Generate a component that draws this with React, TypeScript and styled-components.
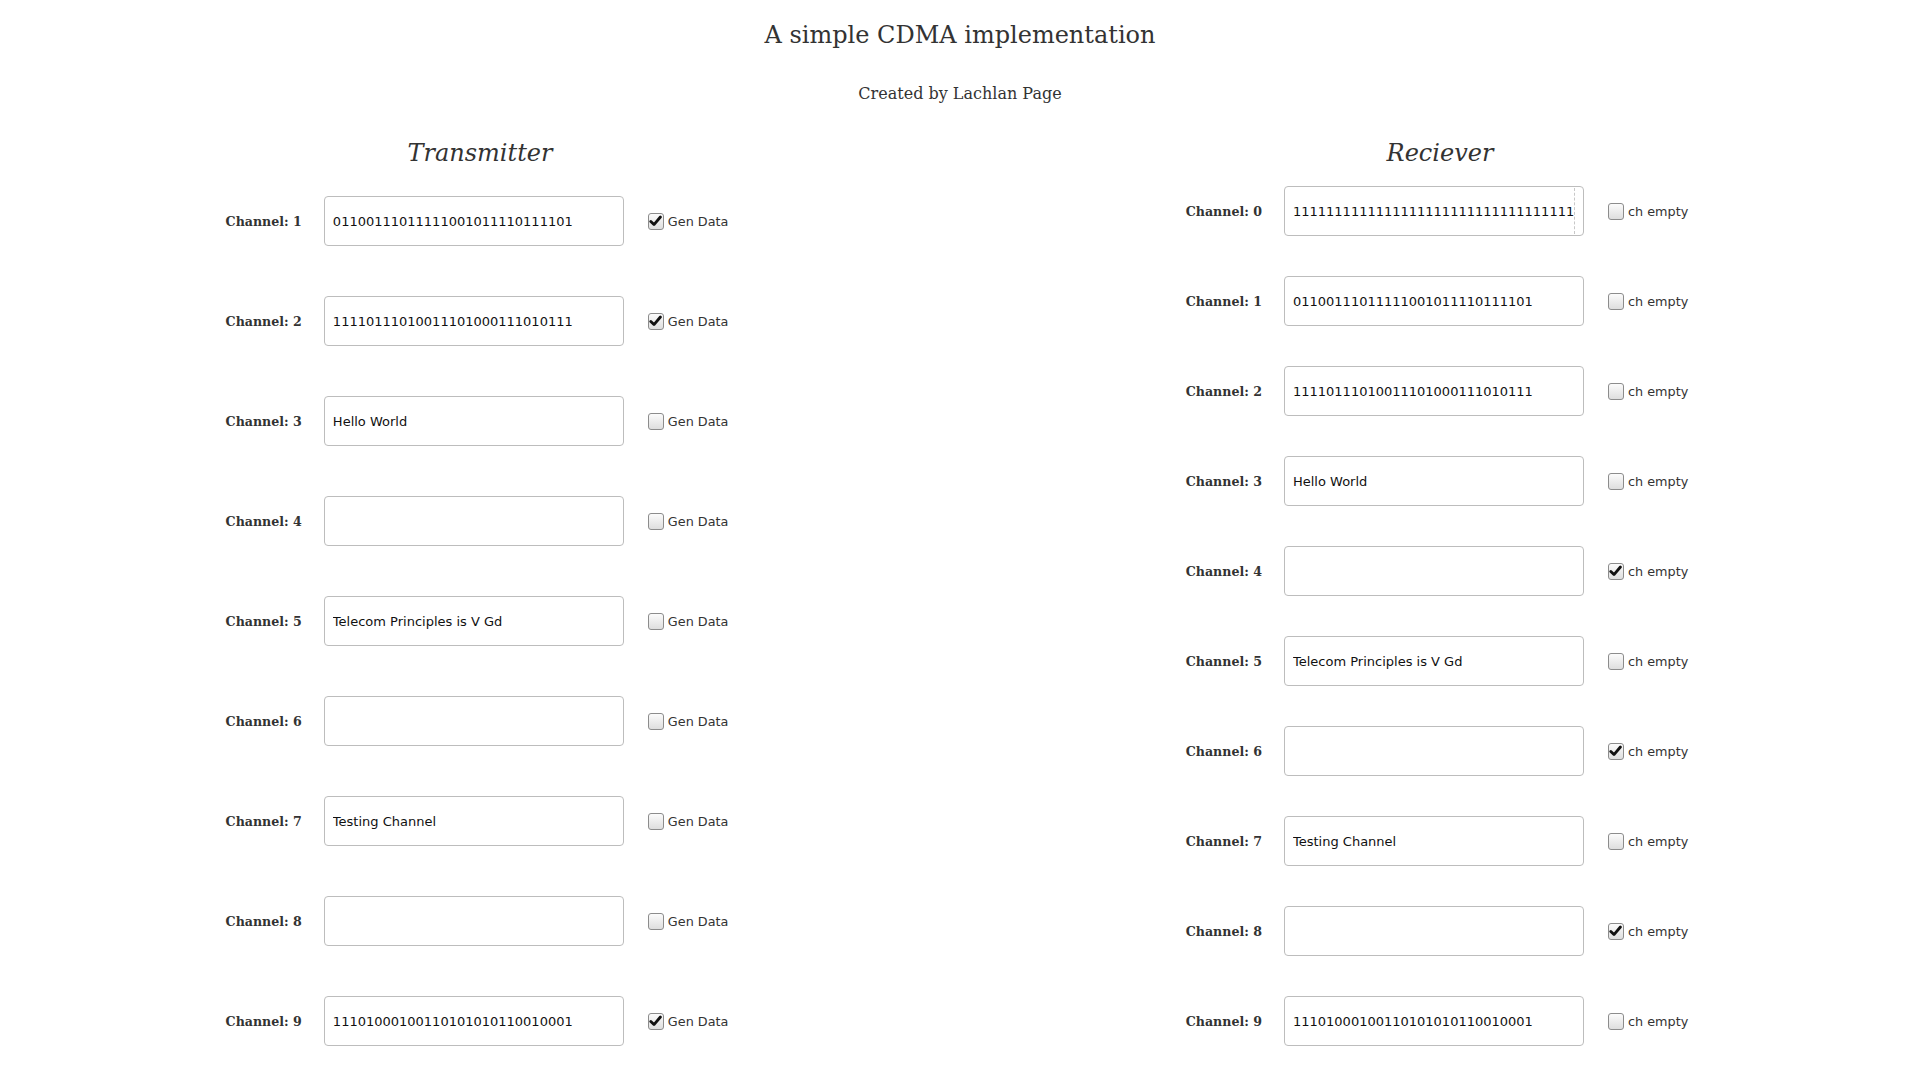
import React from "react";
import styled, { createGlobalStyle } from "styled-components";

const Global = createGlobalStyle`
  html, body { margin: 0; padding: 0; background: #fff; }
  body { font-family: "DejaVu Serif", serif; color: #333; }
`;

const Page = styled.div`
  width: 1920px;
  padding-top: 21px;
`;

const Title = styled.h1`
  margin: 0;
  font-family: "DejaVu Serif", serif;
  font-weight: normal;
  font-size: 24px;
  line-height: 28px;
  text-align: center;
  color: #333;
`;

const Subtitle = styled.p`
  margin: 35px 0 0;
  font-family: "DejaVu Serif", serif;
  font-size: 16px;
  line-height: 20px;
  text-align: center;
  color: #333;
`;

const Columns = styled.div`
  display: grid;
  grid-template-columns: 1fr 1fr;
  margin-top: 35px;
`;

const Column = styled.section`
  display: flex;
  flex-direction: column;
`;

const ColumnTitle = styled.h2`
  margin: 0;
  font-family: "DejaVu Serif", serif;
  font-style: italic;
  font-weight: normal;
  font-size: 24px;
  line-height: 28px;
  text-align: center;
  color: #333;
`;

const Rows = styled.div<{ $offset: number }>`
  display: flex;
  flex-direction: column;
  margin-top: ${(p) => p.$offset}px;
`;

const Row = styled.div<{ $h: number }>`
  height: ${(p) => p.$h}px;
  display: flex;
  align-items: center;
  justify-content: center;
  padding-right: 6px;
`;

const Label = styled.label`
  font-family: "DejaVu Serif", serif;
  font-weight: bold;
  font-size: 12.6px;
  color: #333;
  margin-right: 22px;
  white-space: nowrap;
`;

const FieldWrap = styled.div`
  position: relative;
  width: 300px;
  height: 50px;
`;

const Field = styled.input`
  box-sizing: border-box;
  width: 300px;
  height: 50px;
  padding: 0 8px;
  border: 1px solid #bdbdbd;
  border-radius: 4px;
  background: #fff;
  font-family: "DejaVu Sans", sans-serif;
  font-size: 13px;
  color: #111;
  outline: none;
`;

const OverflowMark = styled.span`
  position: absolute;
  top: 2px;
  bottom: 2px;
  right: 9px;
  border-left: 1px dashed #c8c8c8;
  pointer-events: none;
`;

const Check = styled.label`
  display: flex;
  align-items: center;
  margin-left: 24px;
  font-family: "DejaVu Sans", sans-serif;
  font-size: 12.8px;
  color: #333;
  white-space: nowrap;
  cursor: pointer;
`;

const Box = styled.span`
  box-sizing: border-box;
  width: 16px;
  height: 17px;
  border: 1px solid #8c8c8c;
  border-radius: 3px;
  background: linear-gradient(#fbfbfb, #dedede);
  margin-right: 4px;
  display: flex;
  align-items: center;
  justify-content: center;
`;

const HiddenInput = styled.input`
  display: none;
`;

const CheckBox: React.FC<{ checked: boolean; text: string }> = ({ checked, text }) => (
  <Check>
    <HiddenInput type="checkbox" defaultChecked={checked} />
    <Box>
      {checked && (
        <svg width="13" height="12" viewBox="0 0 13 12">
          <path d="M1.8 6.4 L5 9.6 L11.4 2" fill="none" stroke="#111" strokeWidth="2.8" strokeLinecap="round" strokeLinejoin="round" />
        </svg>
      )}
    </Box>
    {text}
  </Check>
);

const ch1 = "01100111011111001011110111101";
const ch2 = "11110111010011101000111010111";
const ch9 = "11101000100110101010110010001";

const tx = [
  { ch: 1, v: ch1, c: true },
  { ch: 2, v: ch2, c: true },
  { ch: 3, v: "Hello World", c: false },
  { ch: 4, v: "", c: false },
  { ch: 5, v: "Telecom Principles is V Gd", c: false },
  { ch: 6, v: "", c: false },
  { ch: 7, v: "Testing Channel", c: false },
  { ch: 8, v: "", c: false },
  { ch: 9, v: ch9, c: true },
];

const rx = [
  { ch: 0, v: "1".repeat(40), c: false },
  { ch: 1, v: ch1, c: false },
  { ch: 2, v: ch2, c: false },
  { ch: 3, v: "Hello World", c: false },
  { ch: 4, v: "", c: true },
  { ch: 5, v: "Telecom Principles is V Gd", c: false },
  { ch: 6, v: "", c: true },
  { ch: 7, v: "Testing Channel", c: false },
  { ch: 8, v: "", c: true },
  { ch: 9, v: ch9, c: false },
];

export default function App() {
  return (
    <Page>
      <Global />
      <Title>A simple CDMA implementation</Title>
      <Subtitle>Created by Lachlan Page</Subtitle>
      <Columns>
        <Column>
          <ColumnTitle>Transmitter</ColumnTitle>
          <Rows $offset={4}>
            {tx.map((r) => (
              <Row key={r.ch} $h={100}>
                <Label>Channel: {r.ch}</Label>
                <FieldWrap>
                  <Field type="text" defaultValue={r.v} />
                </FieldWrap>
                <CheckBox checked={r.c} text="Gen Data" />
              </Row>
            ))}
          </Rows>
        </Column>
        <Column>
          <ColumnTitle>Reciever</ColumnTitle>
          <Rows $offset={-1}>
            {rx.map((r) => (
              <Row key={r.ch} $h={90}>
                <Label>Channel: {r.ch}</Label>
                <FieldWrap>
                  <Field type="text" defaultValue={r.v} />
                  {r.ch === 0 && <OverflowMark />}
                </FieldWrap>
                <CheckBox checked={r.c} text="ch empty" />
              </Row>
            ))}
          </Rows>
        </Column>
      </Columns>
    </Page>
  );
}
